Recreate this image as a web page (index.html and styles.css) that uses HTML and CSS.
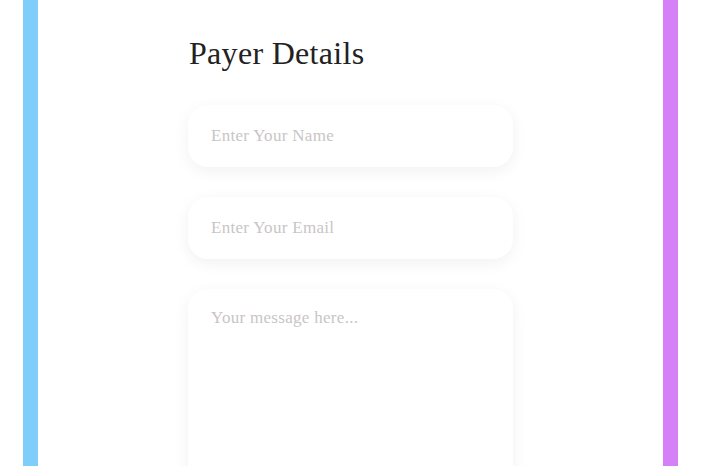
FILE: index.html
```html
<!DOCTYPE html>
<html lang="en">
<head>
<meta charset="utf-8">
<title>Payer Details</title>
<link rel="stylesheet" href="styles.css">
</head>
<body>
<div class="frame">
  <form class="form">
    <h2 class="title">Payer Details</h2>
    <input class="field" type="text" placeholder="Enter Your Name">
    <input class="field" type="email" placeholder="Enter Your Email">
    <textarea class="field area" placeholder="Your message here..."></textarea>
  </form>
</div>
</body>
</html>
```
FILE: styles.css
```css
html, body {
  margin: 0;
  padding: 0;
  background: #ffffff;
  height: 100%;
  overflow: hidden;
}
body {
  padding-left: 23px;
  font-family: "Liberation Serif", "DejaVu Serif", serif;
}
.frame {
  width: 625px;
  height: 466px;
  border-left: 15px solid #7fcdfb;
  border-right: 15px solid #d680f8;
  display: flex;
  justify-content: center;
  overflow: hidden;
}
.form {
  width: 325px;
  display: flex;
  flex-direction: column;
  padding-top: 35px;
  gap: 30px;
}
.title {
  margin: 0 0 4px 1px;
  font-weight: 400;
  font-size: 32px;
  letter-spacing: 0.3px;
  line-height: 36px;
  color: #222222;
}
.field {
  box-sizing: border-box;
  width: 325px;
  height: 62px;
  flex-shrink: 0;
  border: none;
  border-radius: 20px;
  background: #ffffff;
  box-shadow: 0 4px 16px rgba(0, 0, 0, 0.06);
  padding: 0 23px;
  font-family: "Liberation Serif", "DejaVu Serif", serif;
  font-size: 17px;
  letter-spacing: 0.3px;
  color: #333;
  outline: none;
}
.field::placeholder {
  color: #c9c5c5;
}
.area {
  height: 220px;
  padding-top: 19px;
  resize: none;
}
```
